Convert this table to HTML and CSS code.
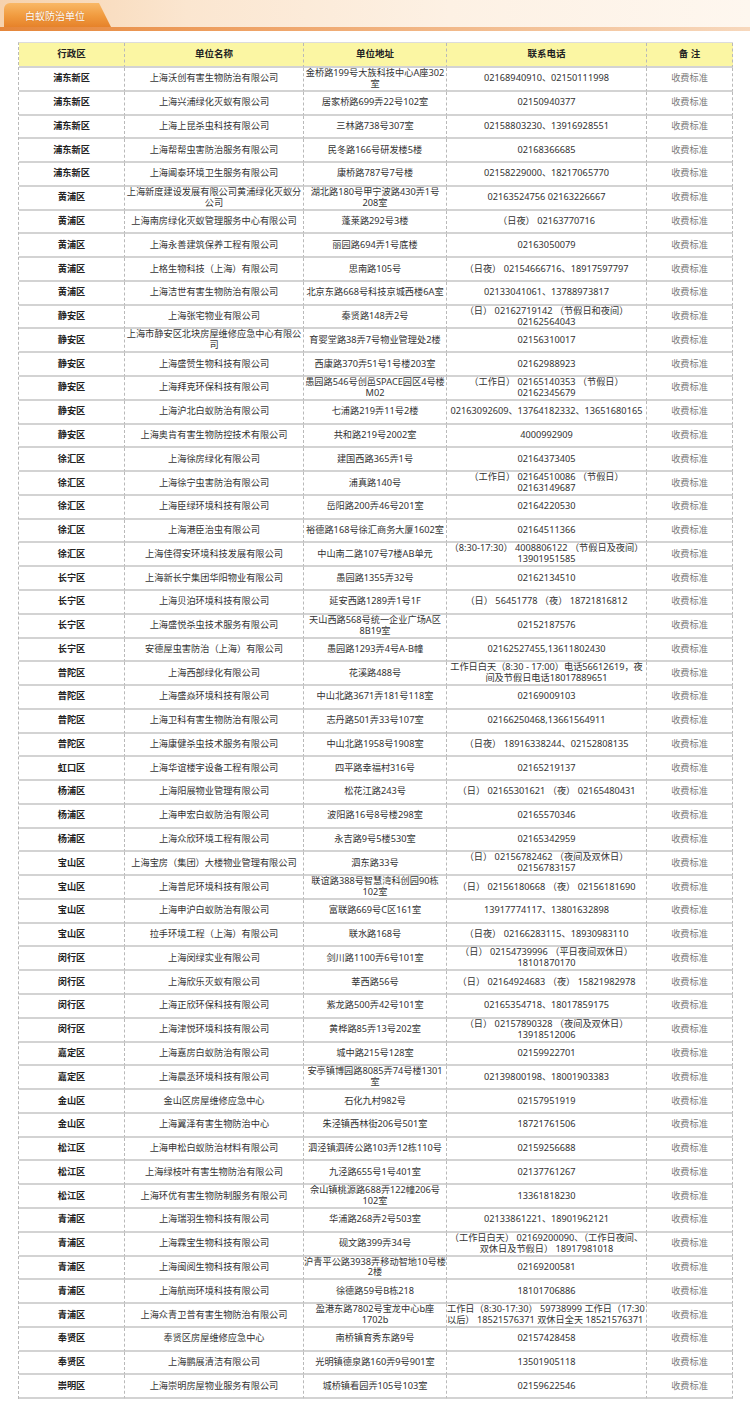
FILE: index.html
```html
<!DOCTYPE html>
<html lang="zh-CN">
<head>
<meta charset="utf-8">
<title>白蚁防治单位</title>
<link rel="stylesheet" href="styles.css">
</head>
<body>
<div class="banner">
  <div class="banner-top">
    <div class="tab">白蚁防治单位</div>
  </div>
  <div class="banner-line"></div>
</div>
<table class="units">
  <colgroup>
    <col class="c1"><col class="c2"><col class="c3"><col class="c4"><col class="c5">
  </colgroup>
  <thead>
    <tr><th>行政区</th><th>单位名称</th><th>单位地址</th><th>联系电话</th><th>备 注</th></tr>
  </thead>
  <tbody>
    <tr><td>浦东新区</td><td>上海沃创有害生物防治有限公司</td><td>金桥路199号大族科技中心A座302<br>室</td><td>02168940910、02150111998</td><td>收费标准</td></tr>
    <tr><td>浦东新区</td><td>上海兴浦绿化灭蚁有限公司</td><td>居家桥路699弄22号102室</td><td>02150940377</td><td>收费标准</td></tr>
    <tr><td>浦东新区</td><td>上海上昆杀虫科技有限公司</td><td>三林路738号307室</td><td>02158803230、13916928551</td><td>收费标准</td></tr>
    <tr><td>浦东新区</td><td>上海帮帮虫害防治服务有限公司</td><td>民冬路166号研发楼5楼</td><td>02168366685</td><td>收费标准</td></tr>
    <tr><td>浦东新区</td><td>上海阊泰环境卫生服务有限公司</td><td>康桥路787号7号楼</td><td>02158229000、18217065770</td><td>收费标准</td></tr>
    <tr><td>黄浦区</td><td>上海新度建设发展有限公司黄浦绿化灭蚁分<br>公司</td><td>湖北路180号甲宁波路430弄1号<br>208室</td><td>02163524756 02163226667</td><td>收费标准</td></tr>
    <tr><td>黄浦区</td><td>上海南房绿化灭蚁管理服务中心有限公司</td><td>蓬莱路292号3楼</td><td>（日夜） 02163770716</td><td>收费标准</td></tr>
    <tr><td>黄浦区</td><td>上海永善建筑保养工程有限公司</td><td>丽园路694弄1号底楼</td><td>02163050079</td><td>收费标准</td></tr>
    <tr><td>黄浦区</td><td>上格生物科技（上海）有限公司</td><td>思南路105号</td><td>（日夜） 02154666716、18917597797</td><td>收费标准</td></tr>
    <tr><td>黄浦区</td><td>上海洁世有害生物防治有限公司</td><td>北京东路668号科技京城西楼6A室</td><td>02133041061、13788973817</td><td>收费标准</td></tr>
    <tr><td>静安区</td><td>上海张宅物业有限公司</td><td>秦贤路148弄2号</td><td>（日） 02162719142 （节假日和夜间）<br>02162564043</td><td>收费标准</td></tr>
    <tr><td>静安区</td><td>上海市静安区北块房屋维修应急中心有限公<br>司</td><td>育婴堂路38弄7号物业管理处2楼</td><td>02156310017</td><td>收费标准</td></tr>
    <tr><td>静安区</td><td>上海盛赞生物科技有限公司</td><td>西康路370弄51号1号楼203室</td><td>02162988923</td><td>收费标准</td></tr>
    <tr><td>静安区</td><td>上海拜克环保科技有限公司</td><td>愚园路546号创邑SPACE园区4号楼<br>M02</td><td>（工作日） 02165140353 （节假日）<br>02162345679</td><td>收费标准</td></tr>
    <tr><td>静安区</td><td>上海沪北白蚁防治有限公司</td><td>七浦路219弄11号2楼</td><td>02163092609、13764182332、13651680165</td><td>收费标准</td></tr>
    <tr><td>静安区</td><td>上海奥肯有害生物防控技术有限公司</td><td>共和路219号2002室</td><td>4000992909</td><td>收费标准</td></tr>
    <tr><td>徐汇区</td><td>上海徐房绿化有限公司</td><td>建国西路365弄1号</td><td>02164373405</td><td>收费标准</td></tr>
    <tr><td>徐汇区</td><td>上海徐宁虫害防治有限公司</td><td>浦真路140号</td><td>（工作日） 02164510086 （节假日）<br>02163149687</td><td>收费标准</td></tr>
    <tr><td>徐汇区</td><td>上海臣绿环境科技有限公司</td><td>岳阳路200弄46号201室</td><td>02164220530</td><td>收费标准</td></tr>
    <tr><td>徐汇区</td><td>上海港臣治虫有限公司</td><td>裕德路168号徐汇商务大厦1602室</td><td>02164511366</td><td>收费标准</td></tr>
    <tr><td>徐汇区</td><td>上海佳得安环境科技发展有限公司</td><td>中山南二路107号7楼AB单元</td><td>（8:30-17:30） 4008806122 （节假日及夜间）<br>13901951585</td><td>收费标准</td></tr>
    <tr><td>长宁区</td><td>上海新长宁集团华阳物业有限公司</td><td>愚园路1355弄32号</td><td>02162134510</td><td>收费标准</td></tr>
    <tr><td>长宁区</td><td>上海贝泊环境科技有限公司</td><td>延安西路1289弄1号1F</td><td>（日） 56451778 （夜） 18721816812</td><td>收费标准</td></tr>
    <tr><td>长宁区</td><td>上海盛悦杀虫技术服务有限公司</td><td>天山西路568号统一企业广场A区<br>8B19室</td><td>02152187576</td><td>收费标准</td></tr>
    <tr><td>长宁区</td><td>安德屋虫害防治（上海）有限公司</td><td>愚园路1293弄4号A-B幢</td><td>02162527455,13611802430</td><td>收费标准</td></tr>
    <tr><td>普陀区</td><td>上海西部绿化有限公司</td><td>花溪路488号</td><td>工作日白天（8:30 - 17:00）电话56612619，夜<br>间及节假日电话18017889651</td><td>收费标准</td></tr>
    <tr><td>普陀区</td><td>上海盛焱环境科技有限公司</td><td>中山北路3671弄181号118室</td><td>02169009103</td><td>收费标准</td></tr>
    <tr><td>普陀区</td><td>上海卫科有害生物防治有限公司</td><td>志丹路501弄33号107室</td><td>02166250468,13661564911</td><td>收费标准</td></tr>
    <tr><td>普陀区</td><td>上海康健杀虫技术服务有限公司</td><td>中山北路1958号1908室</td><td>（日夜） 18916338244、02152808135</td><td>收费标准</td></tr>
    <tr><td>虹口区</td><td>上海华谊楼宇设备工程有限公司</td><td>四平路幸福村316号</td><td>02165219137</td><td>收费标准</td></tr>
    <tr><td>杨浦区</td><td>上海阳展物业管理有限公司</td><td>松花江路243号</td><td>（日） 02165301621 （夜） 02165480431</td><td>收费标准</td></tr>
    <tr><td>杨浦区</td><td>上海申宏白蚁防治有限公司</td><td>波阳路16号8号楼298室</td><td>02165570346</td><td>收费标准</td></tr>
    <tr><td>杨浦区</td><td>上海众欣环境工程有限公司</td><td>永吉路9号5楼530室</td><td>02165342959</td><td>收费标准</td></tr>
    <tr><td>宝山区</td><td>上海宝房（集团）大楼物业管理有限公司</td><td>泗东路33号</td><td>（日） 02156782462 （夜间及双休日）<br>02156783157</td><td>收费标准</td></tr>
    <tr><td>宝山区</td><td>上海普尼环境科技有限公司</td><td>联谊路388号智慧湾科创园90栋<br>102室</td><td>（日） 02156180668 （夜） 02156181690</td><td>收费标准</td></tr>
    <tr><td>宝山区</td><td>上海申沪白蚁防治有限公司</td><td>富联路669号C区161室</td><td>13917774117、13801632898</td><td>收费标准</td></tr>
    <tr><td>宝山区</td><td>拉手环境工程（上海）有限公司</td><td>联水路168号</td><td>（日夜） 02166283115、18930983110</td><td>收费标准</td></tr>
    <tr><td>闵行区</td><td>上海闵绿实业有限公司</td><td>剑川路1100弄6号101室</td><td>（日） 02154739996 （平日夜间双休日）<br>18101870170</td><td>收费标准</td></tr>
    <tr><td>闵行区</td><td>上海欣乐灭蚁有限公司</td><td>莘西路56号</td><td>（日） 02164924683 （夜） 15821982978</td><td>收费标准</td></tr>
    <tr><td>闵行区</td><td>上海正欣环保科技有限公司</td><td>紫龙路500弄42号101室</td><td>02165354718、18017859175</td><td>收费标准</td></tr>
    <tr><td>闵行区</td><td>上海津悦环境科技有限公司</td><td>黄桦路85弄13号202室</td><td>（日） 02157890328 （夜间及双休日）<br>13918512006</td><td>收费标准</td></tr>
    <tr><td>嘉定区</td><td>上海嘉房白蚁防治有限公司</td><td>城中路215号128室</td><td>02159922701</td><td>收费标准</td></tr>
    <tr><td>嘉定区</td><td>上海晨丞环境科技有限公司</td><td>安亭镇博园路8085弄74号楼1301<br>室</td><td>02139800198、18001903383</td><td>收费标准</td></tr>
    <tr><td>金山区</td><td>金山区房屋维修应急中心</td><td>石化九村982号</td><td>02157951919</td><td>收费标准</td></tr>
    <tr><td>金山区</td><td>上海翼泽有害生物防治中心</td><td>朱泾镇西林街206号501室</td><td>18721761506</td><td>收费标准</td></tr>
    <tr><td>松江区</td><td>上海申松白蚁防治材料有限公司</td><td>泗泾镇泗砖公路103弄12栋110号</td><td>02159256688</td><td>收费标准</td></tr>
    <tr><td>松江区</td><td>上海绿枝叶有害生物防治有限公司</td><td>九泾路655号1号401室</td><td>02137761267</td><td>收费标准</td></tr>
    <tr><td>松江区</td><td>上海环优有害生物防制服务有限公司</td><td>佘山镇桃源路688弄122幢206号<br>102室</td><td>13361818230</td><td>收费标准</td></tr>
    <tr><td>青浦区</td><td>上海瑞羽生物科技有限公司</td><td>华浦路268弄2号503室</td><td>02133861221、18901962121</td><td>收费标准</td></tr>
    <tr><td>青浦区</td><td>上海霖宝生物科技有限公司</td><td>砚文路399弄34号</td><td>（工作日白天） 02169200090、（工作日夜间、<br>双休日及节假日） 18917981018</td><td>收费标准</td></tr>
    <tr><td>青浦区</td><td>上海闽阅生物科技有限公司</td><td>沪青平公路3938弄移动智地10号楼<br>2楼</td><td>02169200581</td><td>收费标准</td></tr>
    <tr><td>青浦区</td><td>上海航崗环境科技有限公司</td><td>徐德路59号B栋218</td><td>18101706886</td><td>收费标准</td></tr>
    <tr><td>青浦区</td><td>上海众青卫普有害生物防治有限公司</td><td>盈港东路7802号宝龙中心b座<br>1702b</td><td class="left">工作日（8:30-17:30） 59738999 工作日（17:30<br>以后） 18521576371 双休日全天 18521576371</td><td>收费标准</td></tr>
    <tr><td>奉贤区</td><td>奉贤区房屋维修应急中心</td><td>南桥镇育秀东路9号</td><td>02157428458</td><td>收费标准</td></tr>
    <tr><td>奉贤区</td><td>上海鹏展清洁有限公司</td><td>光明镇德泉路160弄9号901室</td><td>13501905118</td><td>收费标准</td></tr>
    <tr><td>崇明区</td><td>上海崇明房屋物业服务有限公司</td><td>城桥镇看园弄105号103室</td><td>02159622546</td><td>收费标准</td></tr>
  </tbody>
</table>
</body>
</html>
```

FILE: styles.css
```css
html, body {
  margin: 0;
  padding: 0;
  background: #ffffff;
}

body {
  width: 750px;
  font-family: "Noto Sans", "Noto Sans CJK SC", sans-serif;
  color: #333333;
}

.banner {
  height: 31px;
  display: flex;
  flex-direction: column;
}

.banner-top {
  flex: 1;
  display: flex;
  align-items: flex-end;
  padding-left: 4px;
  background: linear-gradient(to right, #f6d2ad 0%, #fbe6d0 25%, #fdf1e4 60%, #fef7ef 100%);
}

.tab {
  height: 24px;
  line-height: 25px;
  padding: 0 26px 0 21px;
  font-size: 10px;
  color: #ffffff;
  font-family: "Noto Sans CJK SC", sans-serif;
  background: linear-gradient(to bottom, #f9b866 0%, #f09a3e 55%, #e6822a 100%);
  border-top-left-radius: 6px;
  clip-path: polygon(0 0, calc(100% - 12px) 0, 100% 100%, 0 100%);
  text-shadow: 0 0 1px rgba(160, 70, 0, 0.5);
}

.banner-line {
  height: 4px;
  background: linear-gradient(to right, #e5863a 0%, #eea062 30%, #f3c197 70%, #f7d8bd 100%);
}

.units {
  margin: 11px 0 0 18px;
  width: 714px;
  table-layout: fixed;
  border-collapse: separate;
  border-spacing: 0;
  border-left: 1px dashed #b9b9b9;
  border-top: 1px solid #dcdcdc;
}

.c1 { width: 106px; }
.c2 { width: 179px; }
.c3 { width: 143px; }
.c4 { width: 200px; }
.c5 { width: 86px; }

.units tr {
  height: 23.76px;
}

.units thead tr {
  height: 25px;
}

.units th,
.units td {
  padding: 0;
  text-align: center;
  vertical-align: middle;
  white-space: nowrap;
  font-size: 9.2px;
  line-height: 10.9px;
  border-right: 1px dashed #b9b9b9;
  border-bottom: 2px solid #d3d3d3;
}

.units th {
  background: #fbf6a3;
  font-weight: bold;
  color: #222222;
  font-size: 9.5px;
}

.units td:first-child {
  font-weight: bold;
  color: #222222;
}

.units td:last-child {
  color: #7a7a7a;
}

.units td.left {
  text-align: left;
}
```
